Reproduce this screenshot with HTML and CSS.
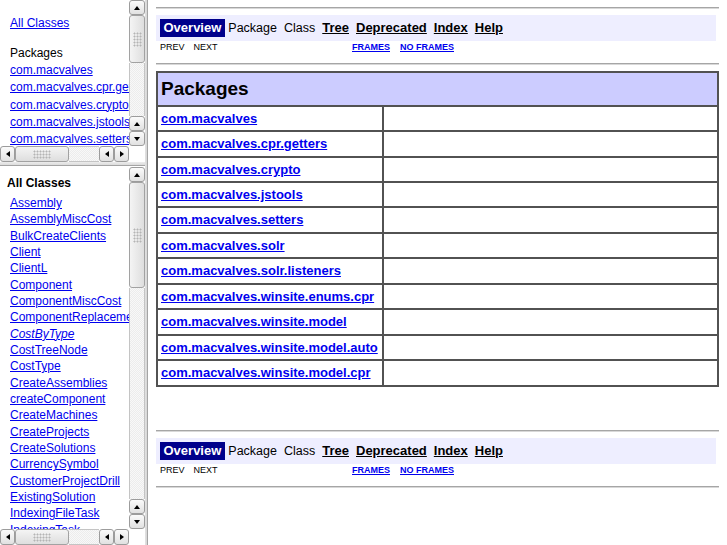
FILE: index.html
```html
<!DOCTYPE html>
<html>
<head>
<meta charset="utf-8">
<title>Overview</title>
<link rel="stylesheet" href="styles.css">
</head>
<body>
<div class="page">
  <div class="left">
    <div class="frame frame-top">
      <div class="content pkg-content">
        <div><a href="#">All Classes</a></div>
        <div class="heading">Packages</div>
        <div><a href="#">com.macvalves</a></div>
        <div><a href="#">com.macvalves.cpr.getters</a></div>
        <div><a href="#">com.macvalves.crypto</a></div>
        <div><a href="#">com.macvalves.jstools</a></div>
        <div><a href="#">com.macvalves.setters</a></div>
        <div><a href="#">com.macvalves.solr</a></div>
        <div><a href="#">com.macvalves.solr.listeners</a></div>
        <div><a href="#">com.macvalves.winsite.enums.cpr</a></div>
        <div><a href="#">com.macvalves.winsite.model</a></div>
        <div><a href="#">com.macvalves.winsite.model.auto</a></div>
        <div><a href="#">com.macvalves.winsite.model.cpr</a></div>
      </div>
      <div class="vscroll">
        <div class="sb-btn up"></div>
        <div class="sb-thumb vthumb thumb-top"></div>
        <div class="sb-track vtrack"></div>
        <div class="sb-btn up"></div>
        <div class="sb-btn down"></div>
      </div>
      <div class="hscroll">
        <div class="sb-btn lt"></div>
        <div class="sb-thumb hthumb"></div>
        <div class="sb-track htrack"></div>
        <div class="sb-btn lt"></div>
        <div class="sb-btn rt"></div>
      </div>
      <div class="corner"></div>
    </div>
    <div class="hsplit"></div>
    <div class="frame frame-bottom">
      <div class="content cls-content">
        <div class="cls-heading">All Classes</div>
        <div class="cls-list">
          <div><a href="#">Assembly</a></div>
          <div><a href="#">AssemblyMiscCost</a></div>
          <div><a href="#">BulkCreateClients</a></div>
          <div><a href="#">Client</a></div>
          <div><a href="#">ClientL</a></div>
          <div><a href="#">Component</a></div>
          <div><a href="#">ComponentMiscCost</a></div>
          <div><a href="#">ComponentReplacement</a></div>
          <div><a href="#"><i>CostByType</i></a></div>
          <div><a href="#">CostTreeNode</a></div>
          <div><a href="#">CostType</a></div>
          <div><a href="#">CreateAssemblies</a></div>
          <div><a href="#">createComponent</a></div>
          <div><a href="#">CreateMachines</a></div>
          <div><a href="#">CreateProjects</a></div>
          <div><a href="#">CreateSolutions</a></div>
          <div><a href="#">CurrencySymbol</a></div>
          <div><a href="#">CustomerProjectDrill</a></div>
          <div><a href="#">ExistingSolution</a></div>
          <div><a href="#">IndexingFileTask</a></div>
          <div><a href="#">IndexingTask</a></div>
        </div>
      </div>
      <div class="vscroll">
        <div class="sb-btn up"></div>
        <div class="sb-thumb vthumb thumb-bottom"></div>
        <div class="sb-track vtrack"></div>
        <div class="sb-btn up"></div>
        <div class="sb-btn down"></div>
      </div>
      <div class="hscroll">
        <div class="sb-btn lt"></div>
        <div class="sb-thumb hthumb"></div>
        <div class="sb-track htrack"></div>
        <div class="sb-btn lt"></div>
        <div class="sb-btn rt"></div>
      </div>
      <div class="corner"></div>
    </div>
  </div>
  <div class="vsplit"></div>
  <div class="right">
    <div class="hr"></div>
    <div class="navbar">
      <div class="bar">
        <span class="nav-item cur">Overview</span>
        <span class="nav-item">Package</span>
        <span class="nav-item">Class</span>
        <span class="nav-item b"><a href="#">Tree</a></span>
        <span class="nav-item b"><a href="#">Deprecated</a></span>
        <span class="nav-item b"><a href="#">Index</a></span>
        <span class="nav-item b"><a href="#">Help</a></span>
      </div>
    </div>
    <div class="subnav">
      <div class="sub-l"><span>PREV</span><span>NEXT</span></div>
      <div class="sub-r"><a href="#">FRAMES</a><a href="#">NO FRAMES</a></div>
    </div>
    <div class="hr hr-mid"></div>
    <table class="pkgs">
      <colgroup><col class="c1"><col class="c2"></colgroup>
      <tr><th colspan="2">Packages</th></tr>
      <tr><td><a href="#">com.macvalves</a></td><td></td></tr>
      <tr><td><a href="#">com.macvalves.cpr.getters</a></td><td></td></tr>
      <tr><td><a href="#">com.macvalves.crypto</a></td><td></td></tr>
      <tr><td><a href="#">com.macvalves.jstools</a></td><td></td></tr>
      <tr><td><a href="#">com.macvalves.setters</a></td><td></td></tr>
      <tr><td><a href="#">com.macvalves.solr</a></td><td></td></tr>
      <tr><td><a href="#">com.macvalves.solr.listeners</a></td><td></td></tr>
      <tr><td><a href="#">com.macvalves.winsite.enums.cpr</a></td><td></td></tr>
      <tr><td><a href="#">com.macvalves.winsite.model</a></td><td></td></tr>
      <tr><td><a href="#">com.macvalves.winsite.model.auto</a></td><td></td></tr>
      <tr><td><a href="#">com.macvalves.winsite.model.cpr</a></td><td></td></tr>
    </table>
    <div class="hr hr-bottom"></div>
    <div class="navbar">
      <div class="bar">
        <span class="nav-item cur">Overview</span>
        <span class="nav-item">Package</span>
        <span class="nav-item">Class</span>
        <span class="nav-item b"><a href="#">Tree</a></span>
        <span class="nav-item b"><a href="#">Deprecated</a></span>
        <span class="nav-item b"><a href="#">Index</a></span>
        <span class="nav-item b"><a href="#">Help</a></span>
      </div>
    </div>
    <div class="subnav">
      <div class="sub-l"><span>PREV</span><span>NEXT</span></div>
      <div class="sub-r"><a href="#">FRAMES</a><a href="#">NO FRAMES</a></div>
    </div>
    <div class="hr hr-mid"></div>
  </div>
</div>
</body>
</html>
```
FILE: styles.css
```css
* { box-sizing: border-box; }
html, body { margin: 0; padding: 0; }
body {
  width: 727px;
  height: 545px;
  overflow: hidden;
  background: #fff;
  color: #000;
  font-family: "Liberation Sans", Arial, Helvetica, sans-serif;
}
a { color: #0000ee; text-decoration: underline; }

.page { display: flex; height: 545px; }

/* ---------- left frames ---------- */
.left { width: 145px; flex: none; display: flex; flex-direction: column; }
.frame {
  display: grid;
  grid-template-columns: 129px 16px;
  grid-template-rows: 1fr 16px;
  background: #fff;
  overflow: hidden;
}
.frame-top { height: 162px; flex: none; }
.frame-bottom { flex: 1; min-height: 0; }
.hsplit {
  height: 5px;
  flex: none;
  background: linear-gradient(#ececec 0, #dcdcdc 3px, #a4a4a4 3px, #a4a4a4 4px, #ffffff 4px);
}
.vsplit {
  width: 3px;
  flex: none;
  background: linear-gradient(90deg, #e2e2e2 0, #d6d6d6 2px, #a4a4a4 2px);
}

.content {
  overflow: hidden;
  white-space: nowrap;
  font-size: 12px;
  min-width: 0;
  min-height: 0;
}
.pkg-content { padding: 14.65px 0 0 10px; line-height: 17.3px; }
.pkg-content .heading { margin-top: 12.7px; }
.cls-content { padding: 8.1px 0 0 0; line-height: 16.33px; }
.cls-heading { font-weight: bold; padding-left: 7px; margin-bottom: 3.7px; }
.cls-list { padding-left: 10px; }

/* ---------- scrollbars ---------- */
.vscroll { display: flex; flex-direction: column; min-height: 0; }
.hscroll { display: flex; min-width: 0; }
.corner { background: #fff; }

.sb-btn {
  flex: none;
  width: 16px;
  height: 15px;
  border: 1px solid #9c9c9c;
  border-radius: 3px;
  background: linear-gradient(#fbfbfb, #e1e1e1);
  display: flex;
  align-items: center;
  justify-content: center;
}
.hscroll .sb-btn {
  width: 15px;
  height: 16px;
  background: linear-gradient(#fbfbfb, #e1e1e1);
}
.sb-btn::before {
  content: "";
  width: 0;
  height: 0;
  border-style: solid;
  border-color: transparent;
}
.up::before { border-width: 0 3.5px 4px 3.5px; border-bottom-color: #000; }
.down::before { border-width: 4px 3.5px 0 3.5px; border-top-color: #000; }
.lt::before { border-width: 3.5px 4px 3.5px 0; border-right-color: #000; }
.rt::before { border-width: 3.5px 0 3.5px 4px; border-left-color: #000; }

.sb-thumb {
  flex: none;
  border: 1px solid #a2a2a2;
  border-radius: 3px;
  display: flex;
  align-items: center;
  justify-content: center;
}
.sb-thumb::after {
  content: "";
  background: radial-gradient(circle, #b4b4b4 0.9px, transparent 1.1px) 0 0 / 3px 3px;
}
.vthumb { width: 16px; background: linear-gradient(90deg, #f4f4f4, #dedede); }
.vthumb::after { width: 9px; height: 15px; }
.thumb-top { height: 48px; }
.thumb-bottom { height: 106px; }
.hthumb { width: 54px; height: 16px; background: linear-gradient(#f4f4f4, #dedede); }
.hthumb::after { width: 18px; height: 9px; }

.sb-track {
  flex: 1;
  background: repeating-conic-gradient(#ececec 0 25%, #f8f8f8 0 50%) 0 0 / 2px 2px;
}
.vtrack { border-left: 1px solid #c4c4c4; border-right: 1px solid #c4c4c4; }
.htrack { border-top: 1px solid #c4c4c4; border-bottom: 1px solid #c4c4c4; }

/* ---------- right frame ---------- */
.right { flex: 1; min-width: 0; padding: 7px 8px 0 8px; }
.hr {
  height: 2px;
  border-top: 1px solid #a6a6a6;
  border-bottom: 1px solid #d8d8d8;
}
.hr-mid { margin-top: 9px; }
.hr-bottom { margin-top: 43px; }

.navbar { margin-top: 6px; display: flex; }
.bar {
  width: 560px;
  height: 26px;
  background: #eeeeff;
  display: flex;
  align-items: center;
  padding-left: 4px;
}
.nav-item {
  padding: 0 3.5px;
  font-size: 12.5px;
  line-height: 18px;
  white-space: nowrap;
}
.nav-item.b { font-size: 13px; font-weight: bold; }
.nav-item.b a { color: #000; }
.nav-item.cur {
  background: #00008b;
  color: #fff;
  font-size: 13px;
  font-weight: bold;
  height: 18px;
}

.subnav {
  display: flex;
  height: 13px;
  line-height: 13px;
  font-size: 9px;
  white-space: nowrap;
}
.sub-l { width: 196px; padding-left: 4px; display: flex; gap: 9px; }
.sub-r { display: flex; gap: 10px; }
.sub-r a { font-weight: bold; }

.pkgs {
  margin-top: 6px;
  width: 563px;
  table-layout: fixed;
  border-collapse: separate;
  border-spacing: 0;
  border: 1px solid #525252;
}
.c1 { width: 226px; }
.pkgs th, .pkgs td {
  border: 1px solid #525252;
  padding: 3px;
  text-align: left;
  white-space: nowrap;
}
.pkgs th {
  background: #ccccff;
  font-size: 19px;
  line-height: 25.7px;
  font-weight: bold;
}
.pkgs td {
  font-size: 13px;
  line-height: 17.43px;
  font-weight: bold;
}
```
